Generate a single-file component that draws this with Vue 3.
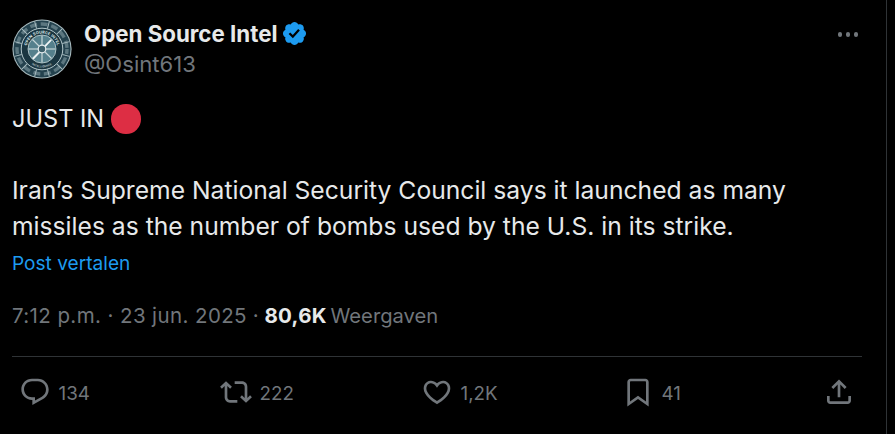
<script setup>
const stats = [
  { key: 'reply', label: '134', d: 'M1.751 10c0-4.42 3.584-8 8.005-8h4.366c4.49 0 8.129 3.64 8.129 8.13 0 2.96-1.607 5.68-4.196 7.11l-8.054 4.46v-3.69h-.067c-4.49.1-8.183-3.51-8.183-8.01zm8.005-6c-3.317 0-6.005 2.69-6.005 6 0 3.37 2.77 6.08 6.138 6.01l.351-.01h1.761v2.3l5.087-2.81c1.951-1.08 3.163-3.13 3.163-5.36 0-3.39-2.744-6.13-6.129-6.13H9.756z' },
  { key: 'rt', label: '222', d: 'M4.5 3.88l4.432 4.14-1.364 1.46L5.5 7.55V16c0 1.1.896 2 2 2H13v2H7.5c-2.209 0-4-1.79-4-4V7.55L1.432 9.48.068 8.02 4.5 3.88zM16.5 6H11V4h5.5c2.209 0 4 1.79 4 4v8.45l2.068-1.93 1.364 1.46-4.432 4.14-4.432-4.14 1.364-1.46 2.068 1.93V8c0-1.1-.896-2-2-2z' },
  { key: 'like', label: '1,2K', d: 'M16.697 5.5c-1.222-.06-2.679.51-3.89 2.16l-.805 1.09-.806-1.09C9.984 6.01 8.526 5.44 7.304 5.5c-1.243.07-2.349.78-2.91 1.91-.552 1.12-.633 2.78.479 4.82 1.074 1.97 3.257 4.27 7.129 6.61 3.87-2.34 6.052-4.64 7.126-6.61 1.111-2.04 1.03-3.7.477-4.82-.561-1.13-1.666-1.84-2.908-1.91zm4.187 7.69c-1.351 2.48-4.001 5.12-8.379 7.67l-.503.3-.504-.3c-4.379-2.55-7.029-5.19-8.382-7.67-1.36-2.5-1.41-4.86-.514-6.67.887-1.79 2.647-2.91 4.601-3.01 1.651-.09 3.368.56 4.798 2.01 1.429-1.45 3.146-2.1 4.796-2.01 1.954.1 3.714 1.22 4.601 3.01.896 1.81.846 4.17-.514 6.67z' },
  { key: 'mark', label: '41', d: 'M4 4.5C4 3.12 5.119 2 6.5 2h11C18.881 2 20 3.12 20 4.5v18.44l-8-5.71-8 5.71V4.5zM6.5 4c-.276 0-.5.22-.5.5v14.56l6-4.29 6 4.29V4.5c0-.28-.224-.5-.5-.5h-11z' },
  { key: 'share', label: '', d: 'M12 2.59l5.7 5.7-1.41 1.42L13 6.41V16h-2V6.41l-3.3 3.3-1.41-1.42L12 2.59zM21 15l-.02 3.51c0 1.38-1.12 2.49-2.5 2.49H5.5C4.11 21 3 19.88 3 18.5V15h2v3.5c0 .28.22.5.5.5h12.98c.28 0 .5-.22.5-.5L19 15h2z' },
]
const spokes = [0, 45, 90, 135]
const ring = [15, 45, 75, 105, 135, 165, 195, 225, 255, 285, 315, 345]
</script>

<template>
  <div class="page">
    <article class="tweet">
      <header class="head">
        <svg class="avatar" viewBox="0 0 60 60" aria-label="Avatar">
          <defs>
            <path id="arcTop" d="M14.5 30a15.5 15.5 0 0 1 31 0" />
            <path id="arcBottom" d="M11.5 30a18.5 18.5 0 0 0 37 0" />
          </defs>
          <circle cx="30" cy="30" r="29.6" fill="#a7b9bd" />
          <circle cx="30" cy="30" r="28.5" fill="#24424e" />
          <circle cx="30" cy="30" r="25" fill="none" stroke="#5c7780" stroke-width="3.4" stroke-dasharray="7 3.7" stroke-dashoffset="2" />
          <g stroke="#a7bbc0" stroke-width="1">
            <line v-for="a in ring" :key="a" x1="30" y1="1.5" x2="30" y2="9" :transform="`rotate(${a} 30 30)`" />
          </g>
          <circle cx="30" cy="30" r="20.8" fill="#1a3641" stroke="#b3c6ca" stroke-width="1" />
          <text class="ring-text"><textPath href="#arcTop" startOffset="50%" text-anchor="middle">OPEN SOURCE INTEL</textPath></text>
          <text class="ring-text small"><textPath href="#arcBottom" startOffset="50%" text-anchor="middle">INTELLIGENCE</textPath></text>
          <circle cx="30" cy="30" r="14" fill="#55808c" stroke="#c3d3d6" stroke-width=".8" />
          <g stroke="#c6d5d8" stroke-width="1.2">
            <line v-for="a in spokes" :key="a" x1="30" y1="16.5" x2="30" y2="43.5" :transform="`rotate(${a} 30 30)`" />
          </g>
          <line x1="21" y1="40" x2="39" y2="21" stroke="#eef3f4" stroke-width="1.8" />
          <circle cx="30" cy="30" r="3.8" fill="#3e616c" stroke="#e4ecee" stroke-width="1.2" />
        </svg>
        <div class="who">
          <div class="name-row">
            <span class="name">Open Source Intel</span>
            <svg class="badge" viewBox="0 0 22 22"><path d="M20.396 11c-.018-.646-.215-1.275-.57-1.816-.354-.54-.852-.972-1.438-1.246.223-.607.27-1.264.14-1.897-.131-.634-.437-1.218-.882-1.687-.47-.445-1.053-.75-1.687-.882-.633-.13-1.29-.083-1.897.14-.273-.587-.704-1.086-1.245-1.44S11.647 1.62 11 1.604c-.646.017-1.273.213-1.813.568s-.969.854-1.24 1.44c-.608-.223-1.267-.272-1.902-.14-.635.13-1.22.436-1.69.882-.445.47-.749 1.055-.878 1.688-.13.633-.08 1.29.144 1.896-.587.274-1.087.705-1.443 1.245-.356.54-.555 1.17-.574 1.817.02.647.218 1.276.574 1.817.356.54.856.972 1.443 1.245-.224.606-.274 1.263-.144 1.896.13.634.433 1.218.877 1.688.47.443 1.054.747 1.687.878.633.132 1.29.084 1.897-.136.274.586.705 1.084 1.246 1.439.54.354 1.17.551 1.816.569.647-.016 1.276-.213 1.817-.567s.972-.854 1.245-1.44c.604.239 1.266.296 1.903.164.636-.132 1.22-.447 1.68-.907.46-.46.776-1.044.908-1.681s.075-1.299-.165-1.903c.586-.274 1.084-.705 1.439-1.246.354-.54.551-1.17.569-1.816zM9.662 14.85l-3.429-3.428 1.293-1.302 2.072 2.072 4.4-4.794 1.347 1.246z" /></svg>
          </div>
          <div class="handle">@Osint613</div>
        </div>
        <div class="more"><i></i><i></i><i></i></div>
      </header>

      <div class="body">
        <p class="line just">JUST IN <span class="dot"></span></p>
        <p class="line para">Iran’s Supreme National Security Council says it launched as many<br />missiles as the number of bombs used by the U.S. in its strike.</p>
      </div>
      <div class="translate">Post vertalen</div>

      <div class="meta">
        <span class="date">7:12 p.m. · 23 jun. 2025</span><span> · </span><b>80,6K</b><span class="views"> Weergaven</span>
      </div>

      <div class="actions">
        <div v-for="s in stats" :key="s.key" class="stat">
          <svg viewBox="0 0 24 24"><path :d="s.d" /></svg>
          <span v-if="s.label" class="count">{{ s.label }}</span>
        </div>
      </div>
    </article>
  </div>
</template>

<style>
html, body { margin: 0; background: #000; overflow: hidden; }
</style>

<style scoped>
.page {
  width: 895px;
  height: 434px;
  background: #000;
  overflow: hidden;
}
.tweet {
  width: 887px;
  height: 434px;
  box-sizing: border-box;
  border-right: 1px solid #2f3336;
  padding: 0 24px 0 12px;
  font-family: "Inter", "Liberation Sans", sans-serif;
  color: #e7e9ea;
}
.head {
  display: flex;
  align-items: flex-start;
  padding-top: 19px;
}
.avatar { width: 60px; height: 60px; flex: none; }
.ring-text { font-size: 3.9px; font-weight: 700; fill: #dbe6e8; letter-spacing: .1px; }
.ring-text.small { font-size: 2.8px; fill: #a7b9bd; }
.who { margin-left: 12px; }
.name-row { display: flex; align-items: center; gap: 4px; height: 29px; }
.name { font-weight: 700; font-size: 22.3px; }
.badge { width: 27px; height: 27px; fill: #1d9bf0; }
.handle { font-size: 22.1px; color: #71767b; line-height: 30px; margin-top: 1px; }
.more {
  margin-left: auto;
  display: flex;
  gap: 3.5px;
  padding: 13px 4px 0 0;
}
.more i { width: 4.5px; height: 4.5px; border-radius: 50%; background: #71767b; }
.body { margin-top: 21px; }
.line { margin: 0; font-size: 24.66px; line-height: 36px; color: #e7e9ea; white-space: nowrap; }
.just { display: flex; align-items: center; gap: 7px; height: 36px; font-size: 23.6px; padding-top: 1px; margin-bottom: -1px; }
.dot { width: 29.5px; height: 29.5px; border-radius: 50%; background: #dd2e44; }
.para { margin-top: 36px; }
.translate { color: #1d9bf0; font-size: 19.1px; line-height: 24px; margin-top: 7px; }
.meta {
  margin-top: 27px;
  font-size: 20.5px;
  line-height: 28px;
  color: #71767b;
  white-space: pre;
}
.date { letter-spacing: .4px; }
.meta b { color: #e7e9ea; font-weight: 700; letter-spacing: .3px; }
.views { font-size: 20.2px; word-spacing: -2px; }
.actions {
  margin-top: 26px;
  border-top: 1px solid #2f3336;
  display: grid;
  grid-template-columns: repeat(4, 201px) auto;
  padding: 18.5px 0 0 7px;
}
.stat {
  display: flex;
  align-items: center;
  gap: 7.5px;
  color: #71767b;
  font-size: 18.8px;
  height: 32px;
}
.stat svg { width: 32px; height: 32px; fill: #71767b; flex: none; }
.count { margin-top: 3px; }
</style>
